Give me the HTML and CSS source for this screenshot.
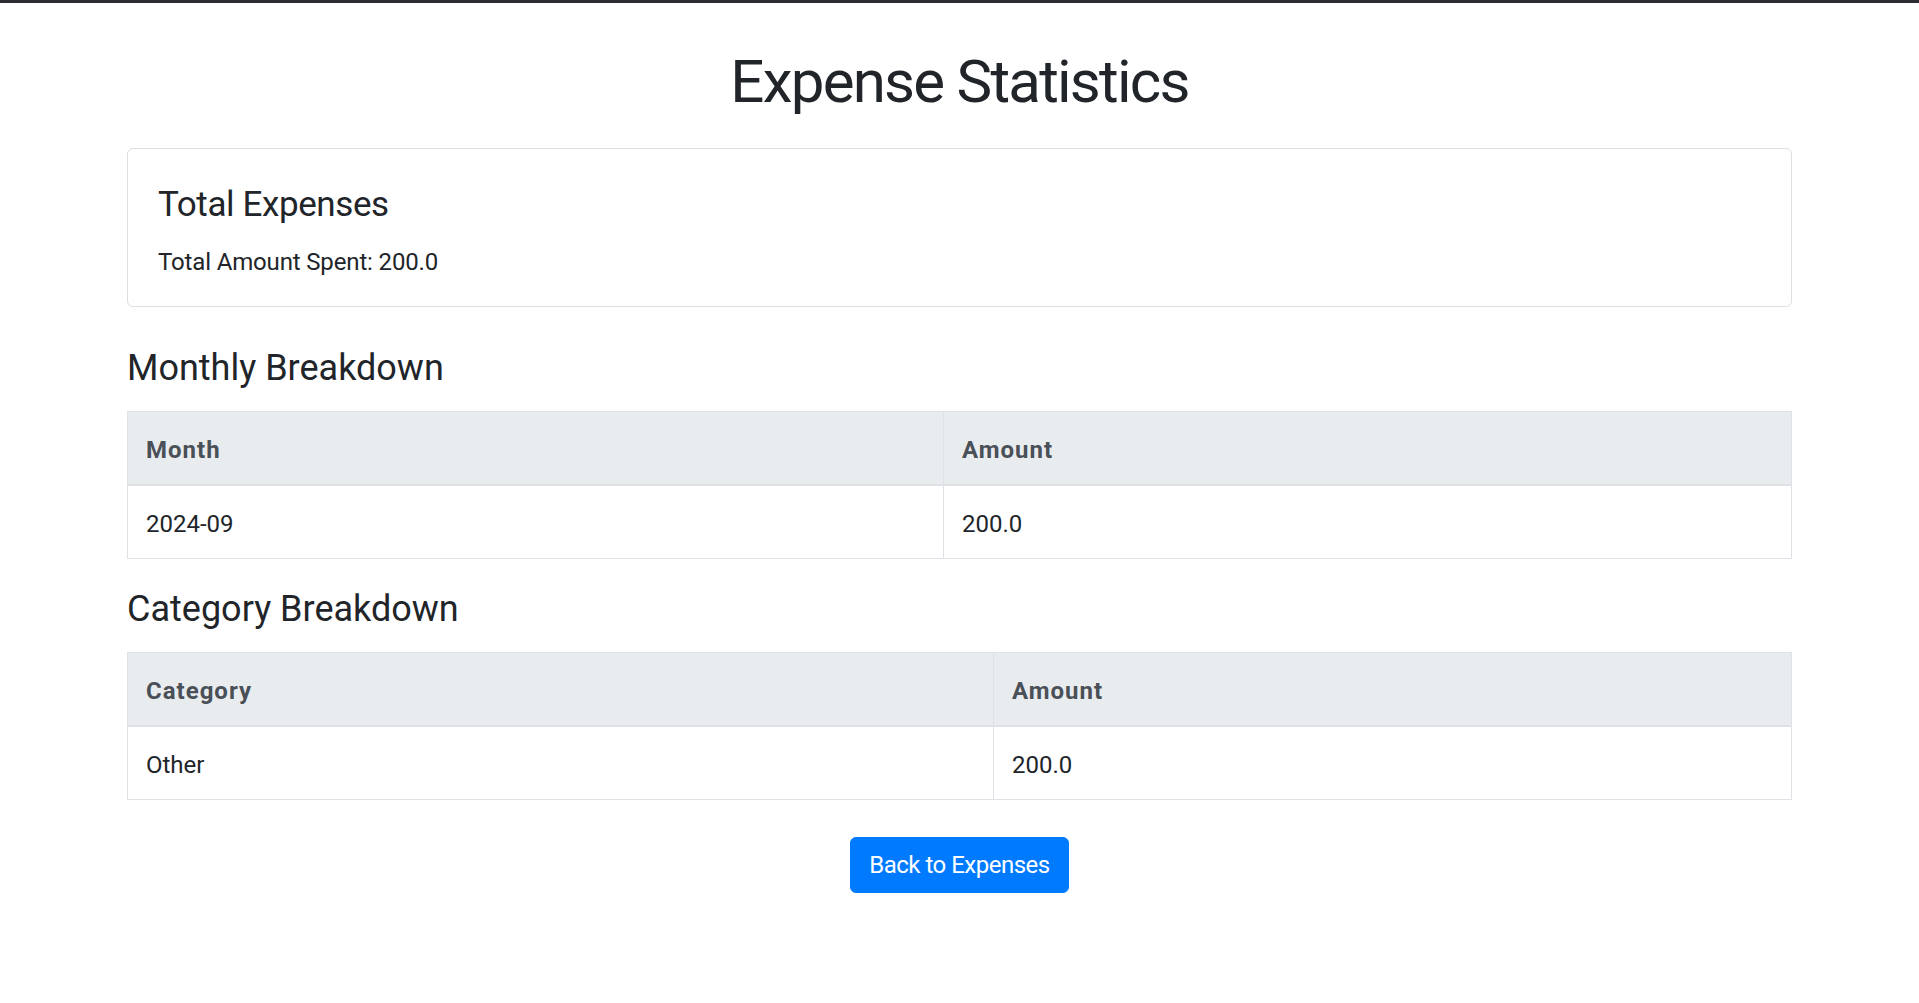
FILE: index.html
```html
<!DOCTYPE html>
<html lang="en">
<head>
<meta charset="utf-8">
<title>Expense Statistics</title>
<link rel="stylesheet" href="styles.css">
</head>
<body>
<div class="topbar"></div>
<main class="container">
  <h1 class="page-title">Expense Statistics</h1>

  <section class="card">
    <div class="card-body">
      <h4 class="card-title">Total Expenses</h4>
      <p class="card-text">Total Amount Spent: 200.0</p>
    </div>
  </section>

  <h3 class="section-title first">Monthly Breakdown</h3>
  <table class="table">
    <thead>
      <tr><th class="col-month">Month</th><th>Amount</th></tr>
    </thead>
    <tbody>
      <tr><td>2024-09</td><td>200.0</td></tr>
    </tbody>
  </table>

  <h3 class="section-title">Category Breakdown</h3>
  <table class="table">
    <thead>
      <tr><th class="col-category">Category</th><th>Amount</th></tr>
    </thead>
    <tbody>
      <tr><td>Other</td><td>200.0</td></tr>
    </tbody>
  </table>

  <div class="actions">
    <a class="btn btn-primary" href="#">Back to Expenses</a>
  </div>
</main>
</body>
</html>
```

FILE: styles.css
```css
* { box-sizing: border-box; }

html, body {
  margin: 0;
  padding: 0;
  background: #ffffff;
}

body {
  font-family: Roboto, "Liberation Sans", Arial, sans-serif;
  font-size: 24px;
  line-height: 36px;
  color: #212529;
}

.topbar {
  height: 3px;
  background: #2b2b31;
}

.container {
  width: 1665px;
  margin: 0 auto;
}

.page-title {
  margin: 42.5px 0 30px;
  font-size: 60px;
  line-height: 72px;
  font-weight: 400;
  text-align: center;
  letter-spacing: -1.75px;
}

.card {
  border: 1px solid #dfdfdf;
  border-radius: 6px;
  background: #fff;
}

.card-body {
  padding: 32px 30px 26px;
}

.card-title {
  margin: 0 0 15px;
  font-size: 35px;
  line-height: 48px;
  font-weight: 400;
  letter-spacing: -0.4px;
}

.card-text {
  margin: 0;
  letter-spacing: -0.15px;
}

.section-title {
  margin: 29px 0 21px;
  font-size: 36px;
  line-height: 43px;
  font-weight: 400;
}

.section-title.first {
  margin-top: 40px;
}

.table {
  width: 100%;
  border-collapse: collapse;
  margin: 0;
}

.table th,
.table td {
  border: 1px solid #dee2e6;
  padding: 20.5px 18px 15.5px;
  text-align: left;
  vertical-align: top;
  line-height: 36px;
}

.table thead th {
  background: #e9ecef;
  color: #495057;
  font-weight: 700;
  letter-spacing: 1px;
  border-bottom: 2px solid #dee2e6;
}

.col-month { width: 816px; }
.col-category { width: 866px; }

.actions {
  display: flex;
  justify-content: center;
  margin-top: 37px;
}

.btn {
  display: inline-block;
  padding: 9px 18px;
  border: 1px solid transparent;
  border-radius: 6px;
  font-size: 24px;
  line-height: 36px;
  letter-spacing: -0.5px;
  text-decoration: none;
}

.btn-primary {
  background: #007bff;
  border-color: #007bff;
  color: #fff;
}
```
